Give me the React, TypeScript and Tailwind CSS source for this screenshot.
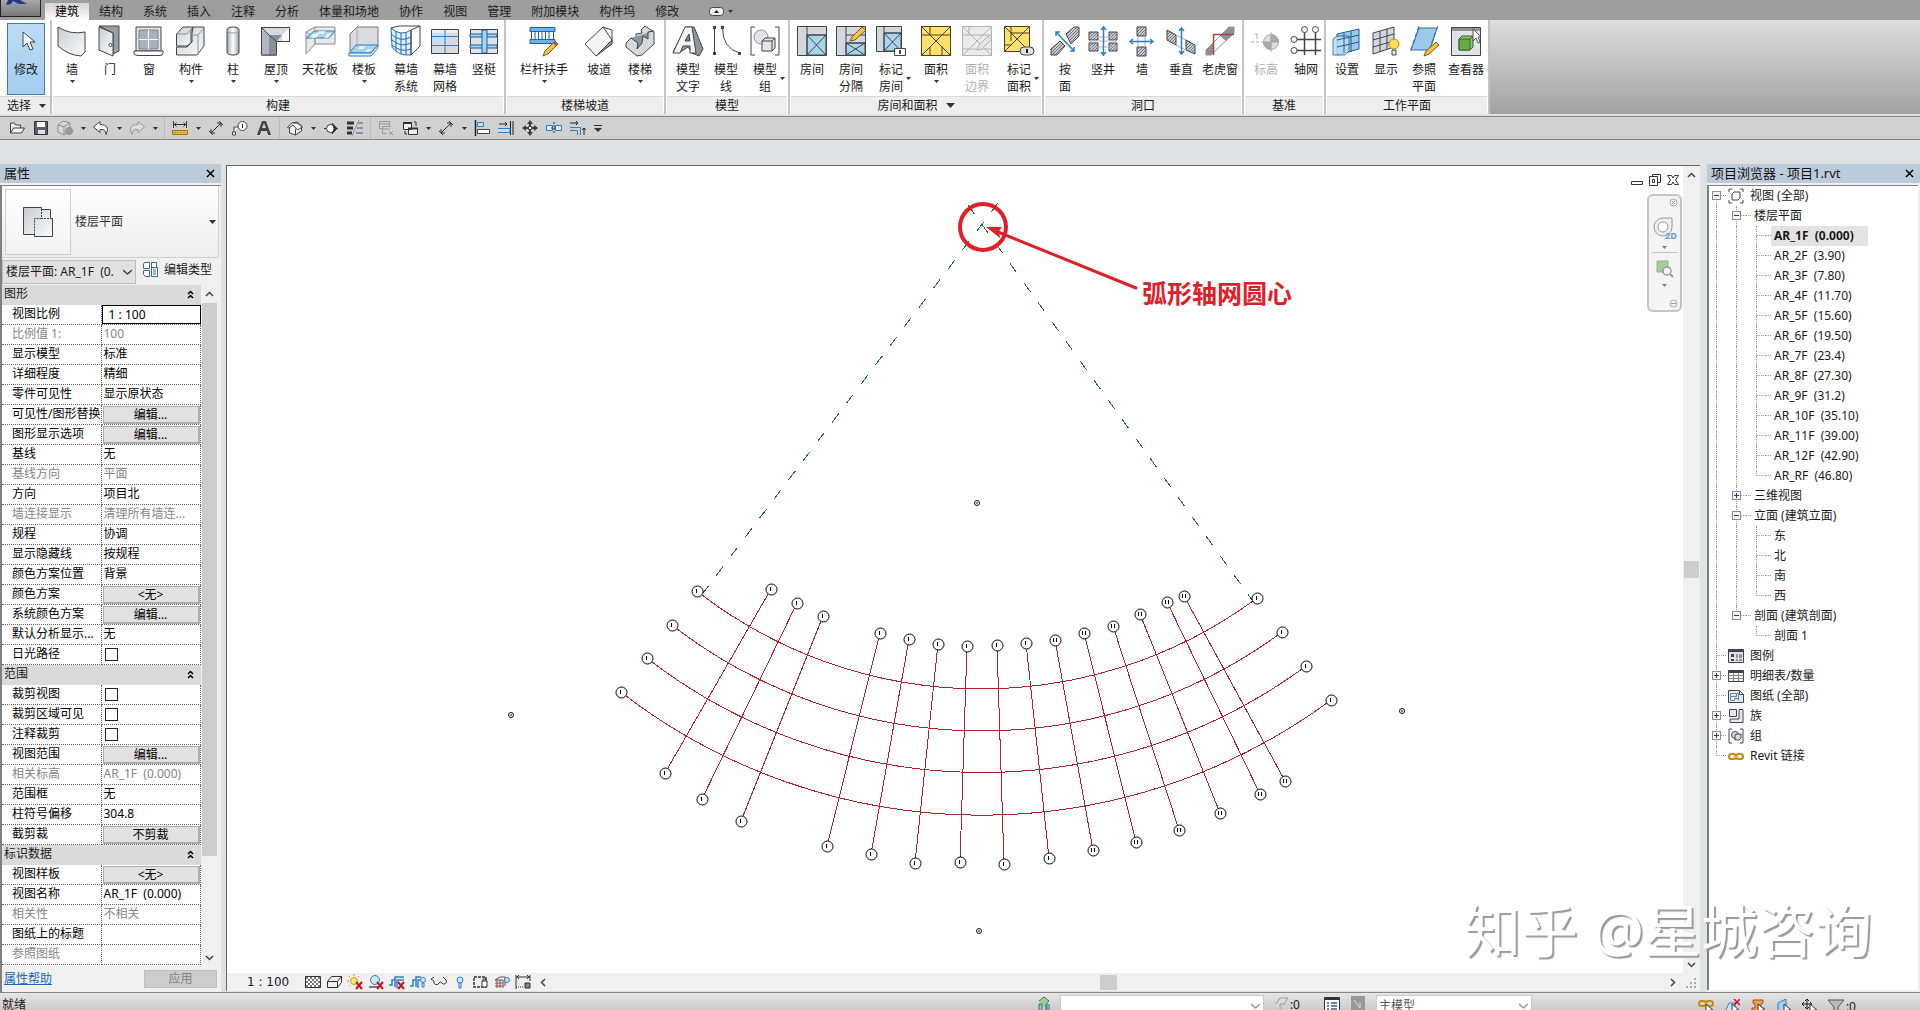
import type { ReactNode } from "react";

const line = "#3f444c";
const blue = "#2f7fc8";

/* Large 32px ribbon icons */
const ribbonIcons: Record<string, ReactNode> = {
  cursor: <path d="M13 6v15l4-4 3 7 3-1-3-7h5z" fill="#fff" stroke={line} />,
  wall: <path d="M2 2Q14 10 29 7V27L25 31Q12 30 2 21Z" fill="url(#metal)" stroke={line} />,
  door: (
    <g stroke={line}>
      <path d="M5 1h20v25l-6 3V8z" fill="#9aa0a9" />
      <path d="M5 2l14 6v23L5 25z" fill="url(#metal)" />
      <circle cx="16.500" cy="20" r="1.500" fill="#fff" />
    </g>
  ),
  window: (
    <g stroke={line}>
      <path d="M3 2h25v24H3z" fill="#e4e6ea" />
      <path d="M6 5h19v19H6z" fill="#a9b1bd" stroke="#7b828c" />
      <path d="M15.500 5v19M6 14.500h19" stroke="#fff" />
      <path d="M1 26h29v2q0 3-4 2.500H5q-4 0-4-2.500z" fill="#fff" />
    </g>
  ),
  component: (
    <g stroke={line} fill="url(#metal)">
      <path d="M1.500 9L8 2h10l-2 3v13l-4 3H1.500z" />
      <path d="M18 2h11v19l-7 9H1.500v-8H12l5-5V8z" />
      <path d="M17 10h6l6-7M23 10v20M1.500 9H12l3-4" fill="none" stroke="#8d939b" />
    </g>
  ),
  column: (
    <g stroke={line}>
      <path d="M10 5q0-3 6-3t6 3v22q0 3-6 3t-6-3z" fill="url(#steel)" />
      <path d="M10 5q0 3 6 3t6-3" fill="none" stroke="#9aa0a7" />
    </g>
  ),
  roof: (
    <g stroke={line}>
      <path d="M1.500 2.500h28v14H16.500v13.500h-15z" fill="#d6d9de" />
      <path d="M1.500 2.500L9 10v20H1.500z" fill="#b2b7bf" stroke="none" />
      <path d="M29.500 2.500L22 10v6.500h7.500z" fill="#f8f8f8" stroke="none" />
      <path d="M9 10h13l-5.500 6.500V30H9z" fill="#8a9099" stroke="none" />
      <path d="M1.500 2.500h28v14H16.500v13.500h-15zM1.500 2.500L9 10M16.500 16.500L9 10" fill="none" />
    </g>
  ),
  ceiling: (
    <g>
      <path d="M2 7v22l9-10h20V2H11z" fill="#e8e8e9" stroke="#8a8a8a" />
      <path d="M11 2v17M2 7l9 6v6" fill="none" stroke="#9a9a9a" />
      <path d="M10 6h21l-6 7H2z" fill="#a9d2f0" stroke={blue} />
      <path d="M15 6l-3 3h7l3-3zM9 9l-3 4h6l3-4zM24 8l-4 5h4l4-5z" fill="#fff" opacity=".7" />
    </g>
  ),
  floor: (
    <g>
      <path d="M2 9l7-7h21v18l-6 6H2z" fill="#d9dbde" stroke="#777" />
      <path d="M9 2v18" stroke="#aaa" />
      <path d="M8 20h22l-7 8H1z" fill="#a9d2f0" stroke={blue} />
      <path d="M1 28v3h22l7-8v-3l-7 8z" fill="#dceefa" stroke={blue} />
      <path d="M12 21l-3 3h6l3-3zM20 24l-3 3h4l3-3z" fill="#fff" opacity=".7" />
    </g>
  ),
  curtain: (
    <g>
      <path d="M1 3q10 9 20 2v25Q8 31 2 22z" fill="#e2effa" stroke="#1d6fb5" />
      <path d="M6 6v20M11 8v21M16 8v22M1 9q9 9 20 3M2 15q9 8 19 3M2 20q9 8 19 4" fill="none" stroke="#1d6fb5" />
      <path d="M1 3l8-2h21v20l-9 9V5l9-4" fill="none" stroke={line} />
    </g>
  ),
  grid: (
    <g>
      <path d="M2.500 4.500h27v24h-27z" fill="#d8dbdf" stroke={line} />
      <path d="M3 5h26v3H3z" fill="#fff" opacity=".5" />
      <path d="M16 5v23M3 11.500h26M3 20.500h26" stroke={blue} />
    </g>
  ),
  mullion: (
    <g>
      <path d="M2.500 4.500h27v24h-27z" fill="#dfe2e6" stroke={line} />
      <path d="M2 9h27v3H2zM2 20h27v3H2z" fill="#a9d2f0" stroke="#175f9f" />
      <path d="M14 5h5v23h-5z" fill="#a9d2f0" stroke="#175f9f" />
    </g>
  ),
  railing: (
    <g>
      <path d="M2 2.500h25v4H2zM2 14.500h25v4H2z" fill="#6fb3e8" stroke="#1766ad" />
      <path d="M3.500 6v9M7 6v9M10.500 6v9M14 6v9M17.500 6v9M21 6v9M25.500 6v9" stroke="#1766ad" />
      <path d="M27 16l3 3-10 10-5 2 2-5z" fill="#f7c243" stroke="#7a5714" />
      <path d="M27 16l3 3-2 2-3-3z" fill="#c0564a" />
    </g>
  ),
  ramp: (
    <g stroke={line}>
      <path d="M2 19L20 2l9 13-16 16z" fill="#f5f5f6" />
      <path d="M20 2l9 3v12" fill="none" />
      <path d="M13 31l16-16v4z" fill="#8f969f" />
    </g>
  ),
  stair: (
    <g stroke={line}>
      <path d="M2 18l5-5 5 1v-5l6-1-1-3 4-4 9 6v12L18 30l-5 1-11-9z" fill="#d5d8dc" />
      <path d="M7 13l7 5-1 6 5-6 1-7 5 3v-7l6-1" fill="#8f969f" />
    </g>
  ),
  modelText: (
    <g stroke={line}>
      <path d="M14 2h8l9 22-4 7-7-3-4-6-6 4-9 1z" fill="#8f969f" />
      <path d="M1 28L13 2h7l4 26h-6v-7h-7l-3 7z" fill="#f3f4f5" />
      <path d="M13 16h5l-1-7z" fill="#777d86" />
    </g>
  ),
  modelLine: (
    <g stroke={line} fill="none">
      <path d="M4.500 3v25M12.500 3q0 20 17 25" />
      <path d="M3 1h3v3H3zM3 27h3v3H3zM11 1h3v3h-3zM28 27h3v3h-3z" fill={line} stroke="none" />
    </g>
  ),
  modelGroup: (
    <g stroke={line}>
      <path d="M6 2H2v28h4M26 2h4v28h-4" fill="none" />
      <circle cx="12" cy="12" r="7" fill="#e3e5e8" stroke="#8b9099" />
      <path d="M13 16l3-3h10v10l-3 3H13z" fill="#e3e5e8" />
      <path d="M13 16h10v10M23 16l3-3" fill="none" />
    </g>
  ),
  room: (
    <g stroke={line}>
      <path d="M1.500 1.500h29v29h-29z" fill="#d3d8df" />
      <path d="M11 10h19v20H11z" fill="#a9d5ea" />
      <path d="M11 1v29M11 10h19M11 10l19 20M30 10L11 30" />
    </g>
  ),
  roomSplit: (
    <g stroke={line}>
      <path d="M1.500 1.500h29v29h-29z" fill="#d3d8df" />
      <path d="M11 18h19v12H11z" fill="#a9d5ea" />
      <path d="M11 1v29M11 10h19M11 18h19M11 18l19 12M30 18L11 30" />
      <path d="M27 2l4 3-11 10-5 1 2-4z" fill="#f7c243" stroke="#7a5714" />
    </g>
  ),
  roomTag: (
    <g stroke={line}>
      <path d="M1.500 1.500h25v25h-25z" fill="#d3d8df" />
      <path d="M9 8h17v18H9z" fill="#a9d5ea" />
      <path d="M9 1v25M9 8h17M9 8l17 18M26 8L9 26" />
      <path d="M19.500 23.500h11v7h-11z" fill="#fff" />
      <path d="M25 25v4" strokeWidth="2" />
    </g>
  ),
  area: (
    <g stroke="#4b421d">
      <path d="M1.500 1.500h29v29h-29z" fill="#fcdf6d" />
      <path d="M1.500 1.500l29 29M30.500 1.500l-29 29M1.500 10h29M10 1.500v8M10 22v8M22 30v-9" />
    </g>
  ),
  areaBoundary: (
    <g stroke="#b3b3b3">
      <path d="M1.500 1.500h29v29h-29z" fill="#ebebeb" />
      <path d="M1.500 1.500l29 29M30.500 1.500l-29 29M1.500 10h29M8 1.500V10M1.500 24h29" />
      <path d="M27 11l4 3-10 10-5 1 2-5z" fill="#e4e4e4" />
    </g>
  ),
  areaTag: (
    <g stroke="#4b421d">
      <path d="M1.500 1.500h25v25h-25z" fill="#fcdf6d" />
      <path d="M1.500 1.500l25 25M26.500 1.500l-25 25M8 8h18M8 1.500V16M1.500 20h7" />
      <rect x="17" y="22" width="14" height="8" rx="4" fill="#dfe1e6" stroke={line} />
      <path d="M24 24v4" stroke="#222" strokeWidth="2" />
    </g>
  ),
  byFace: (
    <g>
      <path d="M17 9l8-7h5v9l-8 8zM2 24l9-8 5 5-8 9H2z" fill="url(#hatch)" stroke={line} />
      <path d="M7 7l18 19M7 11V7h4M25 22v4h-4" fill="none" stroke={blue} strokeWidth="1.500" />
    </g>
  ),
  shaft: (
    <g>
      <path d="M2 7h9v8H2zM22 7h8v8h-8zM2 18h9v8H2zM22 18h8v8h-8z" fill="url(#hatch)" stroke={line} />
      <path d="M2 16h28M2 12h28M2 22h28" stroke="#b2b6bc" />
      <path d="M16.500 2v28M14 5l2.500-3L19 5M14 27l2.500 3 2.500-3" fill="none" stroke={blue} strokeWidth="1.500" />
    </g>
  ),
  wallOpening: (
    <g>
      <path d="M11 2h9v9h-9zM11 22h9v9h-9z" fill="url(#hatch)" stroke={line} />
      <path d="M12 11v11M19 11v11" stroke="#aaa" />
      <path d="M4 16.500h23M7 14l-3 2.500L7 19M24 14l3 2.500-3 2.500" fill="none" stroke={blue} strokeWidth="1.500" />
    </g>
  ),
  vertical: (
    <g>
      <path d="M2 5l9 5v10l-9-5zM21 15l9 5v9l-9-4z" fill="url(#hatch)" stroke={line} />
      <path d="M11 10l10 5M11 20l10 5" stroke="#aaa" />
      <path d="M16.500 3v26M14 6l2.500-3L19 6M14 26l2.500 3 2.500-3" fill="none" stroke={blue} strokeWidth="1.500" />
    </g>
  ),
  dormer: (
    <g>
      <path d="M2 25L25 2h5v6L7 30H2z" fill="#fff" stroke="#8a8f96" />
      <path d="M16 11l9-9h5v6l-8 8M2 25l7-7v10l-2 2H2z" fill="#8c9199" />
      <path d="M9.500 30V9.500H30" fill="none" stroke="#b2403c" strokeWidth="1.500" />
    </g>
  ),
  level: (
    <g stroke="#aaa">
      <path d="M1 17h29" strokeDasharray="3 2" />
      <path d="M5 9h2v5" fill="none" />
      <circle cx="21" cy="17" r="7.500" fill="#ddd" />
      <path d="M21 9.500V17h7.500A7.500 7.500 0 0021 9.500M21 24.500V17h-7.500A7.500 7.500 0 0021 24.500" fill="#aaa" />
      <path d="M21 7v20" />
    </g>
  ),
  gridAxis: (
    <g stroke={line} fill="#fff">
      <path d="M14.500 7v23M25.500 7v23M7 14.500h24M7 25.500h24" strokeWidth="1.500" />
      <circle cx="14.500" cy="4.500" r="3" />
      <circle cx="25.500" cy="4.500" r="3" />
      <circle cx="4" cy="14.500" r="3" />
      <circle cx="4" cy="25.500" r="3" />
    </g>
  ),
  planeSet: (
    <g stroke="#1e5f93">
      <path d="M6 9l22-5v20L6 30z" fill="#9ccbe9" />
      <path d="M2 14l4-3h12v15l-4 4H2z" fill="#bcdff3" opacity=".8" />
      <path d="M13 8v20M20 6v21M6 15l22-5M6 22l22-5" />
    </g>
  ),
  planeShow: (
    <g stroke={line}>
      <path d="M3 8l21-6v20L3 29z" fill="#d4d8de" />
      <path d="M10 6v21M17 4v20M3 15l21-6M3 22l21-6" />
      <circle cx="24" cy="19" r="5" fill="#ffe14e" stroke="#b18a16" />
      <path d="M22 25h4v5h-4z" fill="#e5e5e5" />
    </g>
  ),
  refPlane: (
    <g>
      <path d="M11 3h18l-7 22H3z" fill="#9ccbe9" stroke="#2a6ea6" />
      <path d="M11 1L2 27M30 1L20 28" stroke="#2a6ea6" strokeDasharray="5 2" />
      <path d="M28 17l3 3-10 9-5 2 2-5z" fill="#f7c243" stroke="#7a5714" />
    </g>
  ),
  viewer: (
    <g>
      <path d="M1.500 2.500h29v28h-29z" fill="#dfe4e8" stroke={line} />
      <path d="M2 3h28v3H2z" fill="#8e9398" />
      <path d="M9 14l3-3h11v11l-3 3H9z" fill="#8fc46f" stroke="#33691e" />
      <path d="M9 14h11v11H9z" fill="#6aa94a" stroke="#33691e" />
      <path d="M20 14l3-3" stroke="#33691e" />
      <path d="M23 4v12l3-3 2 5 2-1-2-5h3z" fill="#fff" stroke="#555" />
    </g>
  ),
};

type RibbonButton = { label: string[]; icon: string; width: string; arrow?: "down" | "side"; disabled?: boolean };

const panels: { title: string; menu?: boolean; buttons: RibbonButton[] }[] = [
  {
    title: "构建",
    buttons: [
      { label: ["墙"], icon: "wall", width: "w-10", arrow: "down" },
      { label: ["门"], icon: "door", width: "w-9" },
      { label: ["窗"], icon: "window", width: "w-[42px]" },
      { label: ["构件"], icon: "component", width: "w-[42px]", arrow: "down" },
      { label: ["柱"], icon: "column", width: "w-[42px]", arrow: "down" },
      { label: ["屋顶"], icon: "roof", width: "w-11", arrow: "down" },
      { label: ["天花板"], icon: "ceiling", width: "w-11" },
      { label: ["楼板"], icon: "floor", width: "w-11", arrow: "down" },
      { label: ["幕墙", "系统"], icon: "curtain", width: "w-10" },
      { label: ["幕墙", "网格"], icon: "grid", width: "w-[38px]" },
      { label: ["竖梃"], icon: "mullion", width: "w-10" },
    ],
  },
  {
    title: "楼梯坡道",
    buttons: [
      { label: ["栏杆扶手"], icon: "railing", width: "w-[76px]", arrow: "down" },
      { label: ["坡道"], icon: "ramp", width: "w-[34px]" },
      { label: ["楼梯"], icon: "stair", width: "w-12", arrow: "down" },
    ],
  },
  {
    title: "模型",
    buttons: [
      { label: ["模型", "文字"], icon: "modelText", width: "w-11" },
      { label: ["模型", "线"], icon: "modelLine", width: "w-8" },
      { label: ["模型", "组"], icon: "modelGroup", width: "w-[46px]", arrow: "side" },
    ],
  },
  {
    title: "房间和面积",
    menu: true,
    buttons: [
      { label: ["房间"], icon: "room", width: "w-11" },
      { label: ["房间", "分隔"], icon: "roomSplit", width: "w-[34px]" },
      { label: ["标记", "房间"], icon: "roomTag", width: "w-[46px]", arrow: "side" },
      { label: ["面积"], icon: "area", width: "w-11", arrow: "down" },
      { label: ["面积", "边界"], icon: "areaBoundary", width: "w-[38px]", disabled: true },
      { label: ["标记", "面积"], icon: "areaTag", width: "w-[46px]", arrow: "side" },
    ],
  },
  {
    title: "洞口",
    buttons: [
      { label: ["按", "面"], icon: "byFace", width: "w-[42px]" },
      { label: ["竖井"], icon: "shaft", width: "w-[34px]" },
      { label: ["墙"], icon: "wallOpening", width: "w-11" },
      { label: ["垂直"], icon: "vertical", width: "w-[34px]" },
      { label: ["老虎窗"], icon: "dormer", width: "w-11" },
    ],
  },
  {
    title: "基准",
    buttons: [
      { label: ["标高"], icon: "level", width: "w-11", disabled: true },
      { label: ["轴网"], icon: "gridAxis", width: "w-9" },
    ],
  },
  {
    title: "工作平面",
    buttons: [
      { label: ["设置"], icon: "planeSet", width: "w-[42px]" },
      { label: ["显示"], icon: "planeShow", width: "w-9" },
      { label: ["参照", "平面"], icon: "refPlane", width: "w-10" },
      { label: ["查看器"], icon: "viewer", width: "w-11" },
    ],
  },
];

const tabs = ["建筑", "结构", "系统", "插入", "注释", "分析", "体量和场地", "协作", "视图", "管理", "附加模块", "构件坞", "修改"];

/* Small 16px toolbar icons */
const smallIcons: Record<string, ReactNode> = {
  open: <path d="M1.500 13V3h4l1 2h5v3M1.500 13l3-5h11l-3 5z" fill="#eee" stroke={line} />,
  save: (
    <g>
      <path d="M1.500 1.500h13v13h-13z" fill="#5a6069" stroke="#2c3138" />
      <path d="M4 2h8v5H4z" fill="#fff" />
      <path d="M5 10h7v4H5z" fill="#dfe3e8" />
    </g>
  ),
  sync: (
    <g stroke="#8e8e8e" fill="#d7d7d7">
      <path d="M1 5l5-4 7 2v8l-6 4-6-3zM1 5l6 2 6-4M7 7v8" />
      <circle cx="12" cy="11" r="3.500" fill="#9c9c9c" />
    </g>
  ),
  undo: <path d="M7 1.500L.5 7 7 12.500V9.500q6-1 6 5 5-10-6-10z" fill="#fff" stroke={line} />,
  redo: <path d="M9 1.500L15.500 7 9 12.500V9.500q-6-1-6 5-5-10 6-10z" fill="#ddd" stroke="#999" />,
  measure: (
    <g>
      <path d="M1.500 1v7M14.500 1v7M2 4.500h12M4.500 2.500l-2 2 2 2M11.500 2.500l2 2-2 2" fill="none" stroke="#333" />
      <path d="M.5 10.500h15v4H.5z" fill="#f5b93b" stroke="#a2711a" />
      <path d="M3 12v1M6 12v1M9 12v1M12 12v1" stroke="#7d5510" />
    </g>
  ),
  dimension: <path d="M3 13L13 3M1 11l4 4M11 1l4 4M3 13v-4M3 13h4M13 3v4M13 3H9" stroke="#333" fill="none" />,
  tag: (
    <g stroke={line} fill="#fff">
      <path d="M2 12V7h6M.5 12h3v3h-3z" />
      <circle cx="10.500" cy="6" r="4.500" />
      <path d="M10.500 4v4" stroke="#222" />
    </g>
  ),
  text: <path d="M1 15L6 1h4l5 14h-3l-1-4H5l-1 4zM6 8h4L8 3z" fill="#444" fillRule="evenodd" />,
  home: (
    <g fill="#eef0f2" stroke={line}>
      <path d="M2.500 7v6l6 2 6-4V6l-4-4-5 1z" />
      <path d="M.5 7.500l4-4.500h5.500l5.500 4-5 3L6 5l-4 3z" />
      <path d="M8.500 9v6" />
    </g>
  ),
  section: (
    <g stroke="#333">
      <path d="M1 8.500h14" />
      <circle cx="7.500" cy="8.500" r="4" fill="#fff" />
      <path d="M9 3l5 5.500L9 14q4-5.500 0-11z" fill="#333" />
    </g>
  ),
  thin: (
    <g>
      <path d="M0 3h7M0 8h6M0 13h5" stroke="#333" strokeWidth="3" />
      <path d="M11 3h5M10 8h6M9 13h7" stroke="#555" />
      <path d="M12 0L5 16" stroke="#5fa1dd" />
    </g>
  ),
  closeHidden: <path d="M1.500 1.500h10v5M1.500 1.500v7H4M4.500 6.500h8M4.500 6.500v7H9M2 4h9M5 9h7M11 11l4 4M15 11l-4 4" fill="none" stroke="#999" />,
  switchWin: (
    <g stroke="#333" fill="#eee">
      <path d="M1.500 3.500h8v6h-8zM6.500 8.500h9v6h-9z" />
      <path d="M1 3h9M6 8.500h10" strokeWidth="2" />
      <path d="M12 2h2v4M3 11v3h2" fill="none" />
    </g>
  ),
  align: (
    <g>
      <path d="M1.500 0v16" stroke="#222" strokeWidth="1.500" />
      <path d="M3.500 2.500h6v4h-6z" fill="#bfe0f8" stroke={blue} />
      <path d="M3.500 9.500h12v4h-12z" fill="#fff" stroke={line} />
    </g>
  ),
  trim: (
    <g>
      <path d="M12.500 1v14M15 1v14" stroke="#222" />
      <path d="M1 4h8M7 2l2 2-2 2" stroke="#222" fill="none" />
      <path d="M0 8.500h12v4H0" fill="#bfe0f8" stroke={blue} />
    </g>
  ),
  move: (
    <g>
      <path d="M8 0l3 4H9v2H7V4H5zM8 16l3-4H9v-2H7v2H5zM0 8l4-3v2h2v2H4v2zM16 8l-4-3v2h-2v2h2v2z" fill="#3a3f46" />
      <path d="M6.500 6.500h3v3h-3z" fill="#fff" stroke={line} />
    </g>
  ),
  split: (
    <g>
      <path d="M.5 5.500h6v5h-6zM9.500 5.500h6v5h-6z" fill="#d9ecfa" stroke={blue} />
      <path d="M8 2v12M5 8h6" stroke="#333" strokeDasharray="2 1" />
    </g>
  ),
  trimCorner: (
    <g fill="none">
      <path d="M0 3h8M6 1l2 2-2 2M14 15V8M12 10l2-2 2 2" stroke="#222" />
      <path d="M0 7.500h10.500V15M0 10.500h7.500V15" stroke={blue} />
    </g>
  ),
};

/* Tool order of the quick access bar: "v" is a drop-down arrow, "|" a separator */
const quickAccess = [
  "open", "save", "sync", "v", "undo", "v", "redo", "v", "|",
  "measure", "v", "dimension", "tag", "text", "|",
  "home", "v", "section", "thin", "|",
  "closeHidden", "switchWin", "v", "dimension", "v", "align", "trim", "move", "split", "trimCorner",
];

type Row = { name: string; value?: string; kind?: "button" | "check" | "input" | "head"; dim?: boolean };

const properties: Row[] = [
  { name: "图形", kind: "head" },
  { name: "视图比例", value: " 1 : 100", kind: "input" },
  { name: "比例值 1:", value: "100", dim: true },
  { name: "显示模型", value: "标准" },
  { name: "详细程度", value: "精细" },
  { name: "零件可见性", value: "显示原状态" },
  { name: "可见性/图形替换", value: "编辑...", kind: "button" },
  { name: "图形显示选项", value: "编辑...", kind: "button" },
  { name: "基线", value: "无" },
  { name: "基线方向", value: "平面", dim: true },
  { name: "方向", value: "项目北" },
  { name: "墙连接显示", value: "清理所有墙连...", dim: true },
  { name: "规程", value: "协调" },
  { name: "显示隐藏线", value: "按规程" },
  { name: "颜色方案位置", value: "背景" },
  { name: "颜色方案", value: "<无>", kind: "button" },
  { name: "系统颜色方案", value: "编辑...", kind: "button" },
  { name: "默认分析显示...", value: "无" },
  { name: "日光路径", kind: "check" },
  { name: "范围", kind: "head" },
  { name: "裁剪视图", kind: "check" },
  { name: "裁剪区域可见", kind: "check" },
  { name: "注释裁剪", kind: "check" },
  { name: "视图范围", value: "编辑...", kind: "button" },
  { name: "相关标高", value: "AR_1F  (0.000)", dim: true },
  { name: "范围框", value: "无" },
  { name: "柱符号偏移", value: "304.8" },
  { name: "截剪裁", value: "不剪裁", kind: "button" },
  { name: "标识数据", kind: "head" },
  { name: "视图样板", value: "<无>", kind: "button" },
  { name: "视图名称", value: "AR_1F  (0.000)" },
  { name: "相关性", value: "不相关", dim: true },
  { name: "图纸上的标题", value: "" },
  { name: "参照图纸", value: "", dim: true },
];

/* Guide codes: "|" line, "t" branch, "l" last branch, "." blank,
   "r" open root, "m" open, "e" open and last, "p" closed */
type Node = { guides: string; text: string; icon?: string; selected?: boolean };

const tree: Node[] = [
  { guides: "r", text: "视图 (全部)", icon: "views" },
  { guides: "|m", text: "楼层平面" },
  { guides: "||t", text: "AR_1F  (0.000)", selected: true },
  { guides: "||t", text: "AR_2F  (3.90)" },
  { guides: "||t", text: "AR_3F  (7.80)" },
  { guides: "||t", text: "AR_4F  (11.70)" },
  { guides: "||t", text: "AR_5F  (15.60)" },
  { guides: "||t", text: "AR_6F  (19.50)" },
  { guides: "||t", text: "AR_7F  (23.4)" },
  { guides: "||t", text: "AR_8F  (27.30)" },
  { guides: "||t", text: "AR_9F  (31.2)" },
  { guides: "||t", text: "AR_10F  (35.10)" },
  { guides: "||t", text: "AR_11F  (39.00)" },
  { guides: "||t", text: "AR_12F  (42.90)" },
  { guides: "||l", text: "AR_RF  (46.80)" },
  { guides: "|p", text: "三维视图" },
  { guides: "|m", text: "立面 (建筑立面)" },
  { guides: "||t", text: "东" },
  { guides: "||t", text: "北" },
  { guides: "||t", text: "南" },
  { guides: "||l", text: "西" },
  { guides: "|e", text: "剖面 (建筑剖面)" },
  { guides: "|.l", text: "剖面 1" },
  { guides: "t", text: "图例", icon: "legend" },
  { guides: "p", text: "明细表/数量", icon: "schedule" },
  { guides: "t", text: "图纸 (全部)", icon: "sheet" },
  { guides: "p", text: "族", icon: "family" },
  { guides: "p", text: "组", icon: "group" },
  { guides: "l", text: "Revit 链接", icon: "link" },
];

const treeIcons: Record<string, ReactNode> = {
  views: <path d="M1 4V1h3M12 1h3v3M15 12v3h-3M4 15H1v-3M4 6l2-2h6v6l-2 2H4z" fill="none" stroke={line} />,
  legend: (
    <g stroke={line}>
      <path d="M.5 1.500h15v13H.5z" fill="#dfe4ec" />
      <path d="M1 3h14" strokeWidth="2" />
      <path d="M3 6h3v3H3zM3 11h3v2H3z" fill={line} stroke="none" />
      <path d="M8 7h2M11 7h3M8 9h2M11 9h3M8 12h2M11 12h3" />
    </g>
  ),
  schedule: (
    <g stroke={line}>
      <path d="M.5 2.500h15v11H.5z" fill="#eef0f3" />
      <path d="M1 4h14" strokeWidth="2" />
      <path d="M.5 7.500h15M.5 10.500h15M5.500 5v8M10.500 5v8" stroke="#888" />
    </g>
  ),
  sheet: (
    <g stroke={line} fill="#dde9f5">
      <path d="M.5 2.500h11l4 4v8H.5zM11.500 2.500v4h4" />
      <path d="M2.500 5.500h6v3h-6zM2.500 8.500v4h4v-2h4v2M8.500 5.500h2v5" fill="none" stroke="#6a84a0" />
    </g>
  ),
  family: <path d="M1.500 1.500h7v7h-7zM11 1.500h4v13h-13V11h9z" fill="#e5e8ed" stroke={line} />,
  group: (
    <g stroke={line} fill="#d9dde3">
      <path d="M4 1H1v14h3M12 1h3v14h-3" fill="none" />
      <circle cx="7" cy="7" r="3.500" />
      <path d="M7 7l2-1h4v4l-2 2H7z" />
    </g>
  ),
  link: (
    <g fill="none" stroke="#c58a10" strokeWidth="2">
      <rect x="1" y="6" width="7" height="5" rx="2.500" />
      <rect x="8" y="6" width="7" height="5" rx="2.500" />
      <path d="M5 8.500h6" stroke="#f3c64d" strokeWidth="1" />
    </g>
  ),
};

/* x1, y1, x2, y2, bubble label of each radial axis */
const radials: [number, number, number, number, string][] = [
  [771, 589, 665, 773, "I"],
  [797, 603, 702, 799, "I"],
  [823, 616, 741, 821, "I"],
  [880, 633, 827, 846, "I"],
  [909, 639, 871, 854, "I"],
  [938, 644, 915, 863, "I"],
  [967, 646, 960, 862, "I"],
  [997, 645, 1004, 864, "I"],
  [1026, 643, 1049, 858, "I"],
  [1055, 640, 1093, 850, "II"],
  [1084, 633, 1136, 842, "II"],
  [1113, 626, 1179, 830, "II"],
  [1140, 614, 1220, 813, "II"],
  [1167, 602, 1260, 794, "II"],
  [1184, 596, 1285, 781, "II"],
];

/* left bubble, right bubble, radius of each arc axis */
const arcs: [number, number, number, number, number][] = [
  [697, 591, 1257, 598, 463],
  [672, 625, 1282, 632, 506],
  [647, 658, 1306, 666, 547],
  [621, 692, 1331, 700, 589],
];

const markers = [[977, 503], [511, 715], [1402, 711], [979, 931]];

function Caret({ big }: { big?: boolean }) {
  return big ? (
    <svg width="9" height="5" className="shrink-0"><path d="M0 0h9L4.500 5z" fill="#333" /></svg>
  ) : (
    <svg width="5" height="3" className="shrink-0"><path d="M0 0h5L2.500 3z" fill="#333" /></svg>
  );
}

function Chevron({ d, color = "#444" }: { d: string; color?: string }) {
  return (
    <svg width="9" height="9" viewBox="0 0 9 9" className="shrink-0">
      <path d={d} fill="none" stroke={color} strokeWidth="1.500" />
    </svg>
  );
}

function Icon({ children, size = 16 }: { children: ReactNode; size?: number }) {
  return (
    <svg width={size} height={size} viewBox={`0 0 ${size} ${size}`} className="shrink-0">
      {children}
    </svg>
  );
}

function Tabs() {
  return (
    <nav className="flex h-5 shrink-0 items-end bg-[#9e9e9e]">
      <button aria-label="应用程序菜单" className="mr-1 h-[17px] w-[41px] shrink-0 self-start overflow-hidden border border-t-0 border-[#222] bg-linear-to-b from-[#a8a8a8] to-[#787878]">
        <svg width="39" height="16" viewBox="0 0 39 16">
          <path d="M7 0l-2 5 5-1 2-3 6 3 8 0-7-4z" fill="#26348f" />
        </svg>
      </button>
      {tabs.map((tab, i) => (
        <button
          key={tab}
          className={`h-[17px] shrink-0 px-[10px] leading-[17px] ${i === 0 ? "bg-linear-to-b from-[#d4d4d4] to-white text-black" : "text-[#1c1c1c]"}`}
        >
          {tab}
        </button>
      ))}
      <button aria-label="最小化功能区" className="ml-5 flex h-[17px] items-center gap-1">
        <svg width="15" height="9">
          <rect x=".5" y=".5" width="14" height="8" rx="3" fill="#eee" stroke="#444" />
          <path d="M5 6l2.500-3L10 6z" fill="#222" />
        </svg>
        <Caret />
      </button>
    </nav>
  );
}

function RibbonItem({ item }: { item: RibbonButton }) {
  return (
    <button disabled={item.disabled} className={`flex shrink-0 flex-col items-center pt-[5px] ${item.width} ${item.disabled ? "text-[#b0b0b0]" : ""}`}>
      <Icon size={32}>{ribbonIcons[item.icon]}</Icon>
      <span className="mt-1 flex items-center">
        {item.arrow === "side" && <span className="w-2" />}
        <span className="flex flex-col whitespace-nowrap leading-[17px]">
          {item.label.map((text) => <span key={text}>{text}</span>)}
        </span>
        {item.arrow === "side" && <span className="flex w-2 justify-end"><Caret /></span>}
      </span>
      {item.arrow === "down" && <span className="mt-[2px] flex"><Caret /></span>}
    </button>
  );
}

function Ribbon() {
  return (
    <div className="flex h-[94px] shrink-0 bg-linear-to-b from-[#dedede] to-[#a2a2a2]">
      <section className="flex w-[52px] shrink-0 flex-col border-r-2 border-[#c4c4c4] bg-white">
        <div className="flex h-[76px] pt-[3px] pl-[7px]">
          <button className="flex h-[72px] w-[38px] flex-col items-center border border-[#3c7fb1] bg-linear-to-b from-[#bcdcf4] to-[#a4cdee] pt-[2px]">
            <Icon size={32}>{ribbonIcons.cursor}</Icon>
            <span className="mt-[3px] leading-[17px]">修改</span>
          </button>
        </div>
        <button className="flex h-[18px] items-center gap-2 border-t border-[#d9d9d9] bg-[#eee] pl-[7px]">
          选择
          <svg width="7" height="4" className="shrink-0"><path d="M0 0h7L3.500 4z" fill="#333" /></svg>
        </button>
      </section>
      {panels.map((panel) => (
        <section key={panel.title} className="flex shrink-0 flex-col border-r-2 border-[#c4c4c4] bg-white">
          <div className="flex h-[76px]">
            {panel.buttons.map((item) => <RibbonItem key={item.icon} item={item} />)}
          </div>
          <h2 className="mx-px flex h-[18px] items-center justify-center gap-2 border-t border-[#d9d9d9] bg-[#eee]">
            {panel.title}
            {panel.menu && <Caret big />}
          </h2>
        </section>
      ))}
    </div>
  );
}

function QuickAccess() {
  return (
    <div className="mt-[2px] flex h-6 shrink-0 items-center border-y border-[#848484] bg-[#d0d0d0] pl-[5px]">
      {quickAccess.map((name, i) => {
        if (name === "|") return <span key={i} className="flex h-full w-[7px] shrink-0 justify-center"><span className="w-px bg-[#bcbcbc]" /></span>;
        if (name === "v") return <button key={i} aria-label="更多" className="flex w-3 shrink-0 justify-center"><Caret /></button>;
        return <button key={i} aria-label={name} className="flex w-6 shrink-0 justify-center"><Icon>{smallIcons[name]}</Icon></button>;
      })}
      <button aria-label="自定义" className="flex w-4 flex-col items-center gap-[2px]">
        <span className="h-px w-2 bg-[#333]" />
        <svg width="8" height="4"><path d="M0 0h8L4 4z" fill="#333" /></svg>
      </button>
    </div>
  );
}

function PanelTitle({ children }: { children: ReactNode }) {
  return (
    <header className="flex h-[19px] shrink-0 items-center justify-between bg-[#bccbd9] pr-[6px] pl-1 text-[13px] text-[#111]">
      <h2 className="leading-[19px]">{children}</h2>
      <button aria-label="关闭"><Chevron d="M1 1l7 7M8 1L1 8" color="#000" /></button>
    </header>
  );
}

function PropertyRow({ row }: { row: Row }) {
  const id = `prop-${row.name}`;
  if (row.kind === "head") {
    return (
      <tr>
        <th colSpan={2} className="h-5 bg-[#dadada] p-0 pr-[6px] pl-[2px] text-left align-top font-normal leading-[18px]">
          <span className="flex items-center justify-between">
            {row.name}
            <Chevron d="M2 4l2.500-2.500L7 4M2 8l2.500-2.500L7 8" color="#000" />
          </span>
        </th>
      </tr>
    );
  }
  return (
    <tr className={row.dim ? "text-[#858585]" : "text-black"}>
      <td className="h-5 overflow-hidden border-r border-b border-dotted border-[#666] p-0 pl-[10px] align-top leading-[17px] whitespace-nowrap">
        <label htmlFor={id}>{row.name}</label>
      </td>
      <td className="h-5 border-r border-b border-dotted border-[#666] p-0 align-top leading-[17px] whitespace-pre">
        {row.kind === "button" && (
          <button id={id} className="mt-px ml-px block h-[18px] w-[97px] border border-r-2 border-b-2 border-[#adadad] bg-[#e1e1e1] leading-[15px]">{row.value}</button>
        )}
        {row.kind === "check" && <input id={id} type="checkbox" className="mt-[3px] ml-[3px] block size-[13px] appearance-none border border-[#222] bg-white" />}
        {row.kind === "input" && <input id={id} defaultValue={row.value} className="block h-[19px] w-[99px] border border-black bg-white pl-[3px] leading-[16px] outline-none" />}
        {!row.kind && <span id={id} className="pl-[2px]">{row.value}</span>}
      </td>
    </tr>
  );
}

function Properties() {
  return (
    <aside className="flex w-[221px] shrink-0 flex-col bg-[#f0f0f0]">
      <PanelTitle>属性</PanelTitle>
      <div className="mt-[2px] flex min-h-0 flex-1 flex-col border-t border-l-2 border-[#808080] pr-[2px]">
        <button className="flex h-[72px] shrink-0 items-center border-r border-b border-[#cfcfcf] bg-linear-to-b from-white to-[#ededed] pr-[2px] pl-[3px] text-left text-[#333]">
          <span className="mr-1 flex size-[66px] items-center justify-center border border-[#cfcfcf] bg-linear-to-b from-white to-[#f2f2f2]">
            <Icon size={32}>
              <path d="M1.500 1.500h18v2h9v9h2v18h-18v-2h-11z" fill="url(#metal)" stroke={line} />
              <path d="M19.500 3v9.500h9M19.500 12.500h-7v16" fill="none" stroke={line} strokeDasharray="2 1" />
            </Icon>
          </span>
          <span className="flex-1">楼层平面</span>
          <svg width="7" height="4"><path d="M0 0h7L3.500 4z" fill="#333" /></svg>
        </button>
        <div className="flex h-[27px] shrink-0 items-start pt-[2px]">
          <div className="relative">
            <select aria-label="楼层平面" className="h-6 w-[134px] appearance-none border border-[#bdbdbd] bg-[#e1e1e1] pl-[3px]">
              <option>{"楼层平面: AR_1F\u00a0\u00a0(0."}</option>
            </select>
            <span className="pointer-events-none absolute top-2 right-1"><Chevron d="M0 2l4.500 4L9 2" /></span>
          </div>
          <button className="flex items-center gap-1 pl-[6px] leading-5">
            <Icon size={18}>
              <path d="M2.500 1.500h5v6h-6V3zM9.500 1.500h5v6h-5zM1.500 9.500h6v6h-4l-2-2z" fill="#fff" stroke="#53677b" />
              <path d="M9.500 6.500h6v9h-6z" fill="#fff" stroke="#2b6ca3" />
              <path d="M11 9h3M11 11h3M11 13h3" stroke="#2b6ca3" />
            </Icon>
            编辑类型
          </button>
        </div>
        <div className="flex min-h-0 flex-1">
          <div className="min-h-0 flex-1 overflow-hidden bg-white">
            <table className="w-full table-fixed border-separate border-spacing-0">
              <tbody>
                {properties.map((row) => <PropertyRow key={row.name} row={row} />)}
              </tbody>
            </table>
          </div>
          <div className="flex w-[18px] flex-col items-center pr-px">
            <span className="flex h-[18px] items-center"><Chevron d="M1 6l3.500-3.500L8 6" /></span>
            <span className="w-[15px] grow-[6] bg-[#cdcdcd]" />
            <span className="grow" />
            <span className="flex h-[18px] items-center"><Chevron d="M1 3l3.500 3.500L8 3" /></span>
          </div>
        </div>
        <footer className="flex h-[26px] shrink-0 items-center justify-between pr-[2px] pl-[2px]">
          <a href="#help" className="text-[#1a66b8] underline">属性帮助</a>
          <button disabled className="h-[18px] w-[73px] border border-[#bfbfbf] bg-[#cccccc] leading-4 text-[#838383]">应用</button>
        </footer>
      </div>
    </aside>
  );
}

function Bubble({ x, y, label }: { x: number; y: number; label: string }) {
  return (
    <g>
      <circle cx={x + 0.5} cy={y + 0.5} r="5.500" fill="#fff" stroke="#000" />
      <path d={label === "I" ? `M${x - 0.5} ${y - 2}v4` : `M${x - 1.5} ${y - 2}v4M${x + 1.5} ${y - 2}v4`} stroke="#000" />
    </g>
  );
}

function Drawing() {
  return (
    <svg viewBox="227 166 1456 807" className="h-full w-full">
      <g shapeRendering="crispEdges">
        <g fill="none" stroke="#1d6a35" strokeDasharray="11 13">
          <path d="M968 205L1252 600" />
          <path d="M998 203L703 593" />
        </g>
        <g fill="none" stroke="#b3202a">
          {arcs.map(([x1, y1, x2, y2, r]) => (
            <path key={r} d={`M${x1 + 5} ${y1 + 4}A${r} ${r} 0 0 0 ${x2 - 4} ${y2 + 3}`} />
          ))}
          {radials.map(([x1, y1, x2, y2]) => <path key={x1} d={`M${x1} ${y1}L${x2} ${y2}`} />)}
        </g>
      </g>
      {arcs.map(([x1, y1, x2, y2, r]) => (
        <g key={r}>
          <Bubble x={x1} y={y1} label="I" />
          <Bubble x={x2} y={y2} label="I" />
        </g>
      ))}
      {radials.map(([x1, y1, x2, y2, label]) => (
        <g key={x1}>
          <Bubble x={x1} y={y1} label={label} />
          <Bubble x={x2} y={y2} label={label} />
        </g>
      ))}
      {markers.map(([x, y]) => (
        <g key={x}>
          <circle cx={x} cy={y} r="2.500" fill="#fff" stroke="#111" />
          <path d={`M${x - 1} ${y}h2`} stroke="#111" />
        </g>
      ))}
      <circle cx="983" cy="227" r="23" fill="none" stroke="#df2029" strokeWidth="4" />
      <path d="M1136 288L998 232" stroke="#df2029" strokeWidth="3" strokeLinecap="round" />
      <path d="M986 227l16 0-3 4 1 7z" fill="#df2029" />
      <text x="1142" y="303" fontSize="25" fontWeight="700" fill="#df2029">弧形轴网圆心</text>
    </svg>
  );
}

function NavigationBar() {
  return (
    <div className="absolute top-7 right-px flex h-[118px] w-[35px] flex-col items-center rounded-md border-2 border-[#c4c4c4] bg-[#f4f4f4] pt-[2px]">
      <button aria-label="关闭导航栏" className="self-end pr-[2px]">
        <svg width="9" height="9" className="block"><circle cx="4.500" cy="4.500" r="3.500" fill="none" stroke="#aaa" /><path d="M3 3l3 3M6 3L3 6" stroke="#999" /></svg>
      </button>
      <button aria-label="二维控制盘" className="mt-[9px]">
        <svg width="26" height="24" className="block">
          <path d="M11 2h9v9a9 9 0 11-9-9z" fill="#eee" stroke="#999" />
          <circle cx="11" cy="11" r="5" fill="#fff" stroke="#999" />
          <text x="13" y="23" fontSize="9" fontWeight="700" fill="#6f9bcb">2D</text>
        </svg>
      </button>
      <span className="mt-[6px] opacity-60"><Caret /></span>
      <span className="my-[3px] h-px w-[26px] shrink-0 bg-[#c4c4c4]" />
      <button aria-label="区域放大" className="mt-1">
        <svg width="18" height="18" className="block">
          <path d="M1 1h11v11H1z" fill="#a5cf98" stroke="#8db681" />
          <circle cx="11" cy="11" r="4" fill="#f4f4f4" stroke="#999" strokeWidth="1.500" />
          <path d="M14 14l3 3" stroke="#999" strokeWidth="2" />
        </svg>
      </button>
      <span className="mt-[6px] opacity-60"><Caret /></span>
      <svg width="9" height="9" className="mt-auto mr-[2px] mb-[2px] self-end"><circle cx="4.500" cy="4.500" r="3.500" fill="none" stroke="#aaa" /><path d="M2 4.500h5" stroke="#999" /></svg>
    </div>
  );
}

const redX = <path d="M9 8l6 7M15 8l-6 7" stroke="#c4151c" strokeWidth="2" />;

const viewIcons: { name: string; art: ReactNode }[] = [
  {
    name: "详细程度",
    art: (
      <g>
        <path d="M.5 2.500h15v11H.5z" fill="#fff" stroke="#333" />
        <path d="M1 4h14M1 8h14M1 12h14" stroke="#777" strokeWidth="2" strokeDasharray="2 2" />
        <path d="M3 6h12M3 10h12" stroke="#777" strokeWidth="2" strokeDasharray="2 2" />
      </g>
    ),
  },
  { name: "视觉样式", art: <path d="M1.500 7.500l4-5h10v6l-4 5h-10zM1.500 7.500h10v6M11.500 7.500l4-5" fill="#f1f1f1" stroke="#333" /> },
  { name: "日光路径", art: <g><circle cx="7" cy="7" r="3.500" fill="#ffe680" stroke="#cf9a13" /><path d="M7 0v2M0 7h2M2 2l1 1M12 2l-1 1M2 12l1-1" stroke="#cf9a13" />{redX}</g> },
  { name: "阴影", art: <g><circle cx="7" cy="6" r="4.500" fill="#cde6fa" stroke={blue} /><path d="M1 13h9" stroke="#777" strokeWidth="2" />{redX}</g> },
  { name: "裁剪", art: <g fill="none" stroke={blue}><path d="M0 11h3V6h3M6 13V3h9M8 14V6h7" strokeWidth="1.500" />{redX}</g> },
  { name: "显示裁剪", art: <g fill="none" stroke={blue}><path d="M0 12h3V6h2M6 13V3h5M8 14V6h3" strokeWidth="1.500" /><circle cx="13" cy="6" r="2.500" fill="#cde6fa" /><path d="M12 9h2v4h-2z" /></g> },
  { name: "临时隐藏", art: <path d="M0 5l3-2M3 7a2.500 2.500 0 105 2q1-2 3 0a2.500 2.500 0 104-3L12 3M3 7L0 5" fill="none" stroke="#333" /> },
  { name: "显示隐藏", art: <g fill="#cde6fa" stroke={blue}><circle cx="8" cy="6" r="3" /><path d="M7 9h2v5H7z" /></g> },
  { name: "临时视图属性", art: <g fill="none" stroke="#333"><path d="M1 3h12v10H1z" strokeWidth="1.500" strokeDasharray="3 1" /><path d="M9 7h5v6H9z" fill="#fff" /><path d="M10 7V5h3v2" /></g> },
  { name: "分析模型", art: <g fill="none"><path d="M1 6l5-3h5v9M1 6h8v8M3 6v8M6 6v8" stroke="#555" /><path d="M1 9h8M1 12h8" stroke="#c23b3b" /><circle cx="13" cy="6" r="2.500" fill="#cde6fa" stroke={blue} /></g> },
  { name: "约束", art: <g fill="none" stroke="#333"><path d="M1 1v14M15 1v6M1 3h14M4 1L2 3l2 2M12 1l2 2-2 2" /><path d="M1 13h8" strokeDasharray="1 1" /><path d="M10 9h5v5h-5z" fill="#888" /></g> },
];

function Canvas() {
  return (
    <section className="mt-px mr-[7px] ml-[5px] mb-px flex min-w-0 flex-1 flex-col border-t border-l border-[#666] bg-[#f0f0f0]">
      <div className="flex min-h-0 flex-1">
        <div className="relative min-w-0 flex-1 bg-white">
          <Drawing />
          <div className="absolute top-2 right-1 flex items-center gap-[6px]">
            <button aria-label="最小化"><svg width="12" height="12" className="block"><path d="M.5 7.500h11v3H.5z" fill="#fff" stroke="#333" /></svg></button>
            <button aria-label="还原"><svg width="12" height="12" className="block"><path d="M3.500.5h8v8h-8z" fill="#fff" stroke="#333" /><path d="M.5 2.500h8v9h-8zM3.500 5.500h2v3h-2z" fill="#fff" stroke="#333" /></svg></button>
            <button aria-label="关闭"><svg width="12" height="12" className="block"><path d="M.5 1.500h4L6 4l1.500-2.500h4L8.500 6l3 4.500h-4L6 8l-1.500 2.500h-4l3-4.500z" fill="#fff" stroke="#333" /></svg></button>
          </div>
          <NavigationBar />
        </div>
        <div className="flex w-[17px] flex-col items-center">
          <span className="flex h-[18px] items-center"><Chevron d="M1 6l3.500-3.500L8 6" /></span>
          <span className="grow" />
          <span className="h-[17px] w-[15px] bg-[#cdcdcd]" />
          <span className="grow" />
          <span className="flex h-[18px] items-center"><Chevron d="M1 3l3.500 3.500L8 3" /></span>
        </div>
      </div>
      <div className="flex h-[18px] shrink-0 items-center pl-5">
        <button className="w-[58px] text-left font-['DejaVu_Sans',sans-serif] whitespace-pre">1 : 100</button>
        <span className="flex gap-[5px]">
          {viewIcons.map((item) => <button key={item.name} aria-label={item.name}><Icon>{item.art}</Icon></button>)}
        </span>
        <span className="ml-2"><Chevron d="M6 1L2.500 4.500 6 8" /></span>
        <span className="flex-1" />
        <span className="h-[15px] w-[17px] bg-[#cdcdcd]" />
        <span className="flex-1" />
        <Chevron d="M3 1l3.500 3.500L3 8" />
        <svg width="12" height="12" className="mr-[3px] ml-2"><path d="M10 2v2M10 6v2M10 10v2M6 6v2M6 10v2M2 10v2" stroke="#aaa" strokeWidth="2" /></svg>
      </div>
    </section>
  );
}

function Guide({ code, first }: { code: string; first: boolean }) {
  const up = !"r.".includes(code);
  const down = "|trmp".includes(code);
  const across = !"|.".includes(code);
  const box = "rmep".includes(code);
  return (
    <span className={`relative flex h-5 shrink-0 ${first ? "w-[17px] pl-[7px]" : "w-5 pl-[10px]"}`}>
      <span className="flex flex-1 flex-col">
        <span className={`h-[10px] border-dotted border-[#999] ${up ? "border-l" : ""} ${across ? "border-b" : ""}`} />
        <span className={`h-[10px] border-dotted border-[#999] ${down ? "border-l" : ""}`} />
      </span>
      {box && (
        <svg width="9" height="9" className="absolute top-[5px] right-[5px]">
          <rect x=".5" y=".5" width="8" height="8" fill="#f5f5f8" stroke="#8d8d98" />
          <path d={code === "p" ? "M2 4.500h5M4.500 2v5" : "M2 4.500h5"} stroke="#2b3a67" />
        </svg>
      )}
    </span>
  );
}

function Browser() {
  return (
    <aside className="flex w-[213px] shrink-0 flex-col bg-[#f0f0f0]">
      <PanelTitle>项目浏览器 - 项目1.rvt</PanelTitle>
      <ul className="mt-[2px] mr-[2px] mb-[2px] flex-1 border-t border-l-2 border-[#808080] bg-white">
        {tree.map((node) => (
          <li key={node.text} className="flex h-5">
            {node.guides.split("").map((code, i) => <Guide key={i} code={code} first={i === 0} />)}
            {node.icon ? (
              <span className="mr-px flex w-5 items-center justify-center"><Icon>{treeIcons[node.icon]}</Icon></span>
            ) : (
              <span className="h-[10px] w-[5px] border-b border-dotted border-[#999]" />
            )}
            <button
              className={`px-[3px] leading-5 whitespace-pre ${node.selected ? "bg-[#e3e3e3] pr-[14px] font-bold" : ""}`}
            >
              {node.text}
            </button>
          </li>
        ))}
      </ul>
    </aside>
  );
}

const selectPointer = <path d="M8 5v9l2-2 2 4 2-1-2-4h3z" fill="#fff" stroke="#333" />;

const selectionTools: { name: string; art: ReactNode }[] = [
  { name: "选择链接", art: <g><g transform="translate(0 -4)">{treeIcons.link}</g>{selectPointer}</g> },
  { name: "选择基线图元", art: <g><path d="M1 13l4-9h7l-3 9z" fill="#cde6fa" stroke={blue} />{selectPointer}<path d="M10 0l6 6M16 0l-6 6" stroke="#c4151c" strokeWidth="1.500" /></g> },
  { name: "选择锁定图元", art: <g><path d="M3 1h10v3l-2 1v4h3v3H2V9h3V5L3 4z" fill="#f0a04c" stroke="#9a4f10" />{selectPointer}</g> },
  { name: "按面选择图元", art: <g><path d="M2 4l8-4v11l-8 5z" fill="#a5d2f4" stroke={blue} />{selectPointer}</g> },
  { name: "选择时拖曳", art: <g><path d="M5 0v10M0 5h10M3 2l2-2 2 2M3 8l2 2 2-2M2 3L0 5l2 2M8 3l2 2-2 2" stroke="#222" fill="none" />{selectPointer}</g> },
  { name: "过滤器", art: <path d="M0 1h16l-6 7v8l-4-2V8z" fill="#b6bcc4" stroke="#555" /> },
];

function StatusBar() {
  return (
    <footer className="flex h-[18px] shrink-0 items-start overflow-hidden border-t border-[#888] bg-linear-to-b from-[#e6e6e6] to-[#cbcbcb] pt-[2px] leading-5">
      <span className="flex-1 pl-[2px]">就绪</span>
      <div className="flex items-start">
        <button aria-label="工作集" className="px-2 pt-px">
          <Icon><path d="M3 5l5-4 5 4-2 2v8M3 15V8h3v7M10 8v7M13 8v7" fill="#9fd08b" stroke="#2f6f9f" /></Icon>
        </button>
        <div className="relative">
          <select aria-label="活动工作集" className="block h-5 w-[204px] appearance-none border border-[#ccc] bg-white"><option></option></select>
          <span className="pointer-events-none absolute top-[7px] right-1"><Chevron d="M0 2l4.500 4L9 2" color="#999" /></span>
        </div>
        <button aria-label="可编辑请求" className="pt-px pl-[10px]"><Icon><path d="M2 8l4-6h8l-4 6H6v7" fill="#ddd" stroke="#999" /></Icon></button>
        <span className="w-[34px]">:0</span>
        <button aria-label="设计选项" className="pt-px"><Icon><path d="M.5 1.500h15v14H.5z" fill="#fff" stroke="#333" /><path d="M1 3h14" stroke="#333" strokeWidth="2" /><path d="M3 7h2M7 7h6M3 10h2M7 10h6M3 13h2M7 13h6" stroke="#2d5f92" strokeWidth="1.500" /></Icon></button>
        <button aria-label="拾取以进行编辑" className="px-[10px] pt-px"><Icon><path d="M1 0h14v16H1z" fill="#999" /><path d="M4 4l6 8V6" fill="none" stroke="#ddd" /></Icon></button>
        <div className="relative">
          <select aria-label="主模型" className="block h-5 w-[156px] appearance-none border border-[#ccc] bg-white pl-[2px] text-[#555]"><option>主模型</option></select>
          <span className="pointer-events-none absolute top-[7px] right-1"><Chevron d="M0 2l4.500 4L9 2" color="#999" /></span>
        </div>
      </div>
      <div className="ml-[166px] flex gap-[10px] pr-[64px]">
        {selectionTools.map((tool) => <button key={tool.name} aria-label={tool.name} className="pt-px"><Icon>{tool.art}</Icon></button>)}
        <span className="-ml-2 pt-[2px]">:0</span>
      </div>
    </footer>
  );
}

export default function App() {
  return (
    <div className="relative flex h-screen flex-col overflow-hidden bg-[#e0e1e3] font-['Noto_Sans','Noto_Sans_CJK_SC',sans-serif] text-xs text-[#1a1a1a]">
      {/* Shared fills for the icons */}
      <svg width="0" height="0" className="absolute">
        <defs>
          <linearGradient id="metal" x1="0" y1="0" x2="1" y2="1">
            <stop offset="0" stopColor="#c9ccd2" />
            <stop offset="1" stopColor="#fbfbfb" />
          </linearGradient>
          <linearGradient id="steel">
            <stop offset="0" stopColor="#a5a9af" />
            <stop offset=".5" stopColor="#fff" />
            <stop offset="1" stopColor="#9da2a8" />
          </linearGradient>
          <pattern id="hatch" width="3" height="3" patternUnits="userSpaceOnUse">
            <path d="M0 0h3v3H0z" fill="#c9ccd0" />
            <path d="M0 3L3 0" stroke="#6d7279" />
          </pattern>
        </defs>
      </svg>
      <Tabs />
      <Ribbon />
      <QuickAccess />
      <main className="mt-6 flex min-h-0 flex-1">
        <Properties />
        <Canvas />
        <Browser />
      </main>
      <StatusBar />
      {/* Watermark */}
      <p className="pointer-events-none absolute right-12 bottom-[42px] text-[57px] leading-[76px] text-white [text-shadow:2px_2px_1px_#999]">
        知乎 @星城咨询
      </p>
    </div>
  );
}
